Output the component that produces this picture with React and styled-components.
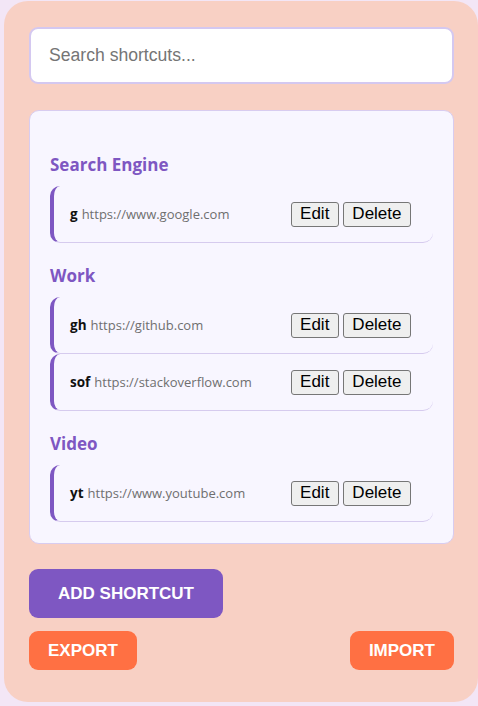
import React from "react";
import styled, { createGlobalStyle } from "styled-components";

const Global = createGlobalStyle`
  html, body { margin: 0; padding: 0; background: #f3e6f6; }
  body { font-family: "Liberation Sans", Arial, sans-serif; }
  * { box-sizing: border-box; }
`;

const Panel = styled.div`
  margin: 1px 0 0 4px;
  width: 474px;
  height: 701px;
  background: #f8d0c4;
  border-radius: 24px;
  padding: 26px 24px 32px 25px;
  display: flex;
  flex-direction: column;
`;

const Search = styled.input`
  width: 100%;
  height: 58px;
  border: 2px solid #d4c8f0;
  border-radius: 9px;
  background: #fff;
  padding: 0 18px;
  font-family: "Liberation Sans", Arial, sans-serif;
  font-size: 17.6px;
  color: #333;
  outline: none;
  &::placeholder { color: #757575; }
`;

const ListCard = styled.div`
  margin-top: 26px;
  background: #f8f6ff;
  border: 1px solid #d8ccf0;
  border-radius: 10px;
  padding: 21px 20px 21px 20px;
`;

const Group = styled.section`
  margin-top: 21px;
`;

const GroupTitle = styled.h3`
  margin: 0 0 10px;
  font-family: "Open Sans", "Noto Sans", sans-serif;
  font-weight: 700;
  font-size: 17px;
  line-height: 23px;
  color: #7e57c2;
`;

const Items = styled.div`
  display: flex;
  flex-direction: column;
`;

const Item = styled.div`
  height: 57px;
  display: flex;
  align-items: center;
  justify-content: space-between;
  border-left: 4px solid #7e57c2;
  border-bottom: 1px solid #d6cbee;
  border-radius: 10px;
  padding: 0 22px 0 16px;
  background: #f8f6ff;
`;

const Info = styled.div`
  font-family: "Open Sans", "Noto Sans", sans-serif;
  display: flex;
  align-items: baseline;
  gap: 4px;
`;

const Key = styled.span`
  font-weight: 700;
  font-size: 13.5px;
  color: #111;
`;

const Url = styled.span`
  font-size: 13px;
  color: #6f6f6f;
`;

const Actions = styled.div`
  display: flex;
  gap: 4px;
`;

const SmallBtn = styled.button`
  font-family: "Liberation Sans", Arial, sans-serif;
  font-size: 17px;
  height: 25px;
  padding: 0 8.5px;
  background: #efefef;
  border: 1px solid #767676;
  border-radius: 3px;
  color: #000;
`;

const AddBtn = styled.button`
  margin-top: 25px;
  align-self: flex-start;
  height: 49px;
  padding: 0 29px;
  border: none;
  border-radius: 9px;
  background: #7e57c2;
  color: #fff;
  font-family: "Liberation Sans", Arial, sans-serif;
  font-weight: 700;
  font-size: 17px;
`;

const Row = styled.div`
  margin-top: 13px;
  display: flex;
  justify-content: space-between;
`;

const OrangeBtn = styled.button`
  height: 39px;
  padding: 0 19px;
  border: none;
  border-radius: 9px;
  background: #ff7043;
  color: #fff;
  font-family: "Liberation Sans", Arial, sans-serif;
  font-weight: 700;
  font-size: 17px;
`;

const data = [
  { title: "Search Engine", items: [{ k: "g", u: "https://www.google.com" }] },
  {
    title: "Work",
    items: [
      { k: "gh", u: "https://github.com" },
      { k: "sof", u: "https://stackoverflow.com" },
    ],
  },
  { title: "Video", items: [{ k: "yt", u: "https://www.youtube.com" }] },
];

export default function App() {
  return (
    <>
      <Global />
      <Panel>
        <Search placeholder="Search shortcuts..." />
        <ListCard>
          {data.map((g) => (
            <Group key={g.title}>
              <GroupTitle>{g.title}</GroupTitle>
              <Items>
                {g.items.map((it) => (
                  <Item key={it.k}>
                    <Info>
                      <Key>{it.k}</Key>
                      <Url>{it.u}</Url>
                    </Info>
                    <Actions>
                      <SmallBtn>Edit</SmallBtn>
                      <SmallBtn>Delete</SmallBtn>
                    </Actions>
                  </Item>
                ))}
              </Items>
            </Group>
          ))}
        </ListCard>
        <AddBtn>ADD SHORTCUT</AddBtn>
        <Row>
          <OrangeBtn>EXPORT</OrangeBtn>
          <OrangeBtn>IMPORT</OrangeBtn>
        </Row>
      </Panel>
    </>
  );
}
